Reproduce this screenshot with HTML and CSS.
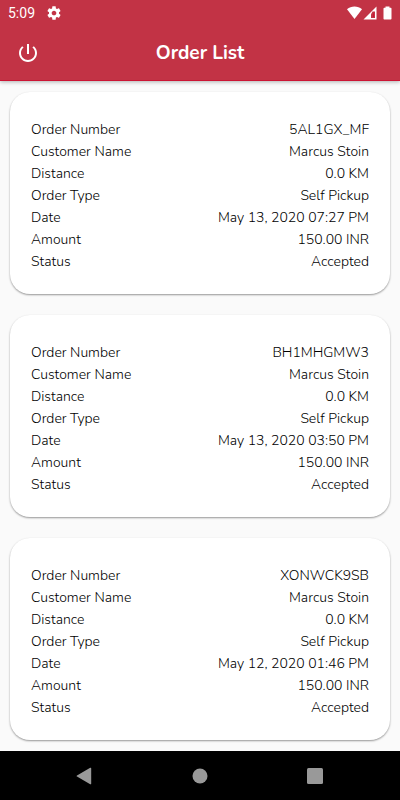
FILE: index.html
```html
<!DOCTYPE html>
<html lang="en">
<head>
    <meta charset="UTF-8">
    <meta name="viewport" content="width=device-width, initial-scale=1.0">
    <title>Order List</title>
    <link rel="stylesheet" href="styles.css">
</head>
<body>

    <header>
        <div class="status-bar">
            <span class="clock">5:09</span>
            <svg class="gear" width="16" height="16" viewBox="0 0 24 24" fill="currentColor" aria-hidden="true">
                <path d="M19.43 12.98c.04-.32.07-.64.07-.98s-.03-.66-.07-.98l2.11-1.65c.19-.15.24-.42.12-.64l-2-3.46c-.12-.22-.39-.3-.61-.22l-2.49 1c-.52-.4-1.08-.73-1.69-.98l-.38-2.65C14.46 2.18 14.25 2 14 2h-4c-.25 0-.46.18-.49.42l-.38 2.65c-.61.25-1.17.59-1.69.98l-2.49-1c-.23-.09-.49 0-.61.22l-2 3.46c-.13.22-.07.49.12.64l2.11 1.65c-.04.32-.07.65-.07.98s.03.66.07.98l-2.11 1.65c-.19.15-.24.42-.12.64l2 3.46c.12.22.39.3.61.22l2.49-1c.52.4 1.08.73 1.69.98l.38 2.65c.03.24.24.42.49.42h4c.25 0 .46-.18.49-.42l.38-2.65c.61-.25 1.17-.59 1.69-.98l2.49 1c.23.09.49 0 .61-.22l2-3.46c.12-.22.07-.49-.12-.64l-2.11-1.65zM12 15.5c-1.93 0-3.5-1.57-3.5-3.5s1.57-3.5 3.5-3.5 3.5 1.57 3.5 3.5-1.57 3.5-3.5 3.5z"/>
            </svg>
            <svg class="system-icons" width="46" height="14" viewBox="0 0 46 14" fill="currentColor" aria-hidden="true">
                <path d="M1 3.2C3.1 1.4 5.7.5 8.500.5s5.400.9 7.500 2.700L8.500 13z"/>
                <path d="M30.500.5v13.100h-13z"/>
                <path d="M29 5.500v6.500h-4V8.300l1.500-2.800z" fill="#c23345"/>
                <path d="M27 7.500h1v3.500h-1z" fill="#cc1433"/>
                <path d="M39.500.5h4v1.300h1c.6 0 1 .4 1 1v9.700c0 .6-.4 1-1 1h-6c-.6 0-1-.4-1-1V2.800c0-.6.4-1 1-1h1z"/>
            </svg>
        </div>
        <div class="app-bar">
            <button class="power" type="button" aria-label="Log out">
                <svg width="24" height="24" viewBox="0 0 24 24" fill="currentColor" aria-hidden="true">
                    <path d="M13 3h-2v10h2V3zm4.83 2.17l-1.42 1.42C17.99 7.86 19 9.81 19 12c0 3.87-3.13 7-7 7s-7-3.13-7-7c0-2.19 1.01-4.14 2.58-5.42L6.17 5.17C4.23 6.82 3 9.26 3 12c0 4.97 4.03 9 9 9s9-4.03 9-9c0-2.74-1.23-5.18-3.17-6.83z"/>
                </svg>
            </button>
            <h1>Order List</h1>
        </div>
    </header>

    <main class="order-list">
        <dl class="order-card">
            <div><dt>Order Number</dt><dd>5AL1GX_MF</dd></div>
            <div><dt>Customer Name</dt><dd>Marcus Stoin</dd></div>
            <div><dt>Distance</dt><dd>0.0 KM</dd></div>
            <div><dt>Order Type</dt><dd>Self Pickup</dd></div>
            <div><dt>Date</dt><dd>May 13, 2020 07:27 PM</dd></div>
            <div><dt>Amount</dt><dd>150.00 INR</dd></div>
            <div><dt>Status</dt><dd>Accepted</dd></div>
        </dl>

        <dl class="order-card">
            <div><dt>Order Number</dt><dd>BH1MHGMW3</dd></div>
            <div><dt>Customer Name</dt><dd>Marcus Stoin</dd></div>
            <div><dt>Distance</dt><dd>0.0 KM</dd></div>
            <div><dt>Order Type</dt><dd>Self Pickup</dd></div>
            <div><dt>Date</dt><dd>May 13, 2020 03:50 PM</dd></div>
            <div><dt>Amount</dt><dd>150.00 INR</dd></div>
            <div><dt>Status</dt><dd>Accepted</dd></div>
        </dl>

        <dl class="order-card">
            <div><dt>Order Number</dt><dd>XONWCK9SB</dd></div>
            <div><dt>Customer Name</dt><dd>Marcus Stoin</dd></div>
            <div><dt>Distance</dt><dd>0.0 KM</dd></div>
            <div><dt>Order Type</dt><dd>Self Pickup</dd></div>
            <div><dt>Date</dt><dd>May 12, 2020 01:46 PM</dd></div>
            <div><dt>Amount</dt><dd>150.00 INR</dd></div>
            <div><dt>Status</dt><dd>Accepted</dd></div>
        </dl>
    </main>

    <nav class="nav-bar">
        <button type="button" aria-label="Back">
            <svg width="18" height="18" viewBox="0 0 18 18" fill="currentColor" aria-hidden="true">
                <path d="M14.200.8c.5-.3 1 0 1 .5v15.400c0 .5-.5.8-1 .5L1 9.600c-.5-.3-.5-.9 0-1.200z"/>
            </svg>
        </button>
        <button type="button" aria-label="Home">
            <svg width="18" height="18" viewBox="0 0 18 18" fill="currentColor" aria-hidden="true">
                <circle cx="9" cy="9" r="7.5"/>
            </svg>
        </button>
        <button type="button" aria-label="Recent apps">
            <svg width="18" height="18" viewBox="0 0 18 18" fill="currentColor" aria-hidden="true">
                <rect x="1" y="1" width="16" height="16" rx="1.5"/>
            </svg>
        </button>
    </nav>

</body>
</html>
```
FILE: styles.css
```css
* {
    box-sizing: border-box;
}

body {
    display: flex;
    flex-direction: column;
    min-height: 100vh;
    margin: 0;
    background-color: #fafafa;
    color: black;
    font-family: Nunito, Lato, "Open Sans", sans-serif;
}

button {
    display: flex;
    align-items: center;
    justify-content: center;
    padding: 0;
    border: none;
    background: none;
    color: inherit;
    cursor: pointer;
}

/* Header */
header {
    background-color: #c23345;
    color: white;
    border-bottom: 1px solid #cc1433;
    box-shadow: 0 1px 4px rgba(0, 0, 0, 0.3);
}

.status-bar {
    display: flex;
    align-items: center;
    height: 25px;
    padding: 0 8px;
}

.clock {
    font-family: Roboto, sans-serif;
    font-size: 14px;
}

.gear {
    margin-left: 11px;
}

.system-icons {
    margin-left: auto;
}

.app-bar {
    display: grid;
    grid-template-columns: 40px 1fr 40px;
    align-items: center;
    height: 55px;
    padding: 0 8px;
}

.power {
    height: 40px;
}

.app-bar h1 {
    margin: 0;
    font-size: 19px;
    font-weight: bold;
    text-align: center;
}

/* Order cards */
.order-list {
    display: flex;
    flex: 1;
    flex-direction: column;
    gap: 21px;
    padding: 11px 10px;
}

.order-card {
    margin: 0;
    padding: 27px 21px 21px;
    background-color: white;
    border-radius: 20px;
    box-shadow: 0 1px 2px rgba(0, 0, 0, 0.4);
    font-size: 14px;
    font-weight: 300;
    line-height: 22px;
}

.order-card div {
    display: flex;
    justify-content: space-between;
}

.order-card dd {
    margin: 0;
}

/* Bottom navigation */
.nav-bar {
    display: flex;
    justify-content: center;
    gap: 75px;
    height: 49px;
    background-color: black;
    color: #999;
}

.nav-bar button {
    width: 40px;
}
```
